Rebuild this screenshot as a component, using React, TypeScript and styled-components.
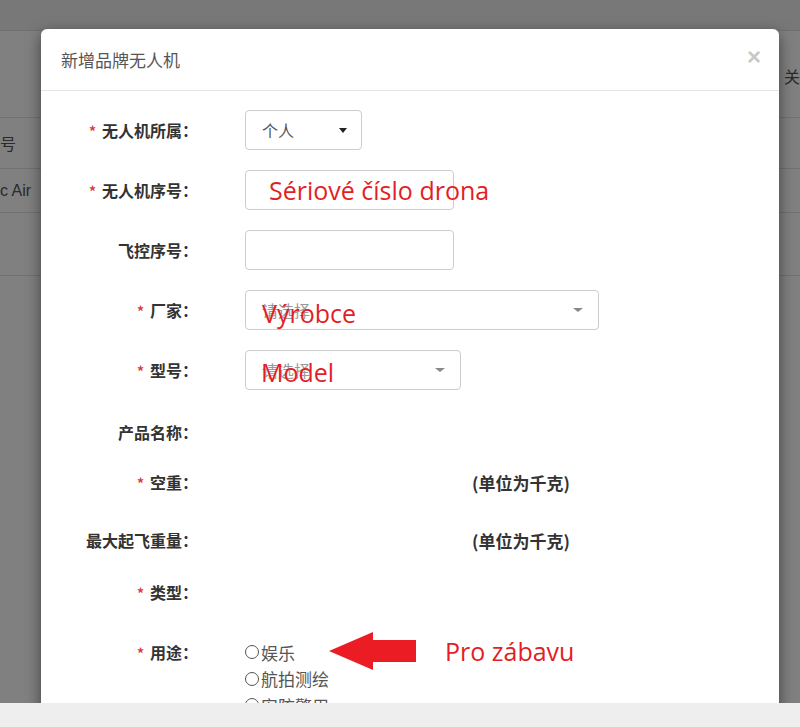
import React from "react";
import styled, { createGlobalStyle } from "styled-components";

const Global = createGlobalStyle`
  html, body { margin: 0; padding: 0; }
  body { font-family: "Noto Sans CJK SC", "Noto Sans", sans-serif; }
`;

const Screen = styled.div`
  position: relative;
  width: 800px;
  height: 727px;
  overflow: hidden;
  background: #808080;
`;

const BgPage = styled.div`
  display: flex;
  flex-direction: column;
`;

const BgTop = styled.div`
  height: 30px;
  background: #787878;
  border-bottom: 1px solid #6f6f6f;
`;

const BgRow = styled.div<{ $h: number }>`
  height: ${(p) => p.$h}px;
  border-bottom: 1px solid #727272;
  display: flex;
  align-items: center;
  justify-content: space-between;
  color: #2a2a2a;
  font-size: 16px;
  font-family: "Liberation Sans", "Noto Sans CJK SC", sans-serif;
`;

const BgCell = styled.span<{ $dy?: number }>`
  margin-top: ${(p) => p.$dy || 0}px;
  white-space: nowrap;
`;

const Modal = styled.div`
  position: absolute;
  left: 41px;
  top: 29px;
  width: 738px;
  height: 720px;
  background: #fff;
  border-radius: 6px;
  box-shadow: 0 5px 15px rgba(0, 0, 0, 0.5);
  display: flex;
  flex-direction: column;
`;

const Header = styled.div`
  height: 62px;
  box-sizing: border-box;
  border-bottom: 1px solid #e5e5e5;
  display: flex;
  align-items: center;
  justify-content: space-between;
  padding: 0 18px 0 20px;
`;

const Title = styled.h4`
  margin: 0;
  font-size: 17px;
  font-weight: 400;
  color: #555;
`;

const Close = styled.span`
  font-family: "Liberation Sans", sans-serif;
  font-size: 24px;
  font-weight: 700;
  color: #c8c8c8;
  margin-top: -6px;
  line-height: 1;
`;

const Body = styled.div`
  padding-top: 9px;
  display: flex;
  flex-direction: column;
`;

const Row = styled.div<{ $h?: number; $top?: boolean }>`
  display: grid;
  grid-template-columns: 157px 1fr;
  column-gap: 47px;
  align-items: ${(p) => (p.$top ? "start" : "center")};
  height: ${(p) => (p.$h ? `${p.$h}px` : "auto")};
  padding-top: ${(p) => (p.$top ? "34px" : "0")};
`;

const Label = styled.label`
  text-align: right;
  font-size: 16px;
  font-weight: 700;
  color: #333;
  line-height: 26px;
  white-space: nowrap;
`;

const Star = styled.span`
  color: #e4393c;
  font-size: 14px;
  margin-right: 6px;
`;

const Control = styled.div`
  position: relative;
  display: flex;
  align-items: center;
`;

const Box = styled.div<{ $w: number }>`
  width: ${(p) => p.$w}px;
  height: 40px;
  box-sizing: border-box;
  border: 1px solid #ccc;
  border-radius: 4px;
  display: flex;
  align-items: center;
  justify-content: space-between;
  padding: 0 14px 0 16px;
  font-size: 16px;
  color: #555;
`;

const Placeholder = styled.span`
  color: #999;
`;

const Caret = styled.span<{ $light?: boolean }>`
  width: 0;
  height: 0;
  border-left: ${(p) => (p.$light ? 5 : 4.5)}px solid transparent;
  border-right: ${(p) => (p.$light ? 5 : 4.5)}px solid transparent;
  border-top: ${(p) => (p.$light ? 4 : 5)}px solid ${(p) => (p.$light ? "#888" : "#222")};
  margin-right: ${(p) => (p.$light ? 1 : 0)}px;
`;

const Unit = styled.span`
  margin-left: 227px;
  font-size: 17px;
  font-weight: 700;
  color: #333;
`;

const RadioList = styled.div`
  display: flex;
  flex-direction: column;
`;

const RadioItem = styled.label`
  display: flex;
  align-items: center;
  height: 26.5px;
  font-size: 17px;
  color: #555;
`;

const RadioDot = styled.span`
  width: 14px;
  height: 14px;
  box-sizing: border-box;
  border: 1.5px solid #555;
  border-radius: 50%;
  margin-right: 2px;
`;

const Note = styled.span<{ $left: number; $top?: number; $dy?: number }>`
  position: absolute;
  left: ${(p) => p.$left}px;
  top: ${(p) =>
    p.$top !== undefined ? `${p.$top}px` : `calc(50% + ${p.$dy || 0}px)`};
  transform: translateY(-50%);
  font-family: "Open Sans", "Liberation Sans", sans-serif;
  font-size: 25px;
  color: #e31e26;
  white-space: nowrap;
  line-height: 1;
`;

const ArrowSvg = styled.svg`
  position: absolute;
  left: 84px;
  top: -9px;
`;

const BottomBar = styled.div`
  position: absolute;
  left: 0;
  right: 0;
  bottom: 0;
  height: 24px;
  background: #eeeeee;
`;

export default function App() {
  return (
    <Screen>
      <Global />
      <BgPage>
        <BgTop />
        <BgRow $h={86}>
          <span />
          <BgCell $dy={3}>关</BgCell>
        </BgRow>
        <BgRow $h={50}>
          <BgCell>号</BgCell>
        </BgRow>
        <BgRow $h={43}>
          <BgCell>c Air</BgCell>
        </BgRow>
        <BgRow $h={62} />
      </BgPage>

      <Modal>
        <Header>
          <Title>新增品牌无人机</Title>
          <Close>×</Close>
        </Header>
        <Body>
          <Row $h={60}>
            <Label>
              <Star>*</Star>无人机所属：
            </Label>
            <Control>
              <Box $w={117}>
                <span>个人</span>
                <Caret />
              </Box>
            </Control>
          </Row>
          <Row $h={60}>
            <Label>
              <Star>*</Star>无人机序号：
            </Label>
            <Control>
              <Box $w={209} />
              <Note $left={24}>Sériové číslo drona</Note>
            </Control>
          </Row>
          <Row $h={60}>
            <Label>飞控序号：</Label>
            <Control>
              <Box $w={209} />
            </Control>
          </Row>
          <Row $h={60}>
            <Label>
              <Star>*</Star>厂家：
            </Label>
            <Control>
              <Box $w={354}>
                <Placeholder>请选择</Placeholder>
                <Caret $light />
              </Box>
              <Note $left={17} $dy={3}>
                Výrobce
              </Note>
            </Control>
          </Row>
          <Row $h={60}>
            <Label>
              <Star>*</Star>型号：
            </Label>
            <Control>
              <Box $w={216}>
                <Placeholder>请选择</Placeholder>
                <Caret $light />
              </Box>
              <Note $left={16} $dy={2}>
                Model
              </Note>
            </Control>
          </Row>
          <Row $h={63}>
            <Label>产品名称：</Label>
            <Control />
          </Row>
          <Row $h={38}>
            <Label>
              <Star>*</Star>空重：
            </Label>
            <Control>
              <Unit>(单位为千克)</Unit>
            </Control>
          </Row>
          <Row $h={78}>
            <Label>最大起飞重量：</Label>
            <Control>
              <Unit>(单位为千克)</Unit>
            </Control>
          </Row>
          <Row $h={26}>
            <Label>
              <Star>*</Star>类型：
            </Label>
            <Control />
          </Row>
          <Row $top>
            <Label>
              <Star>*</Star>用途：
            </Label>
            <Control>
              <RadioList>
                <RadioItem>
                  <RadioDot />
                  娱乐
                </RadioItem>
                <RadioItem>
                  <RadioDot />
                  航拍测绘
                </RadioItem>
                <RadioItem>
                  <RadioDot />
                  安防警用
                </RadioItem>
              </RadioList>
              <ArrowSvg width="90" height="44" viewBox="0 0 90 44">
                <polygon
                  points="0,21 44,2 44,10 87,10 87,32 44,32 44,40"
                  fill="#ec1c24"
                />
              </ArrowSvg>
              <Note $left={200} $top={12}>
                Pro zábavu
              </Note>
            </Control>
          </Row>
        </Body>
      </Modal>
      <BottomBar />
    </Screen>
  );
}
